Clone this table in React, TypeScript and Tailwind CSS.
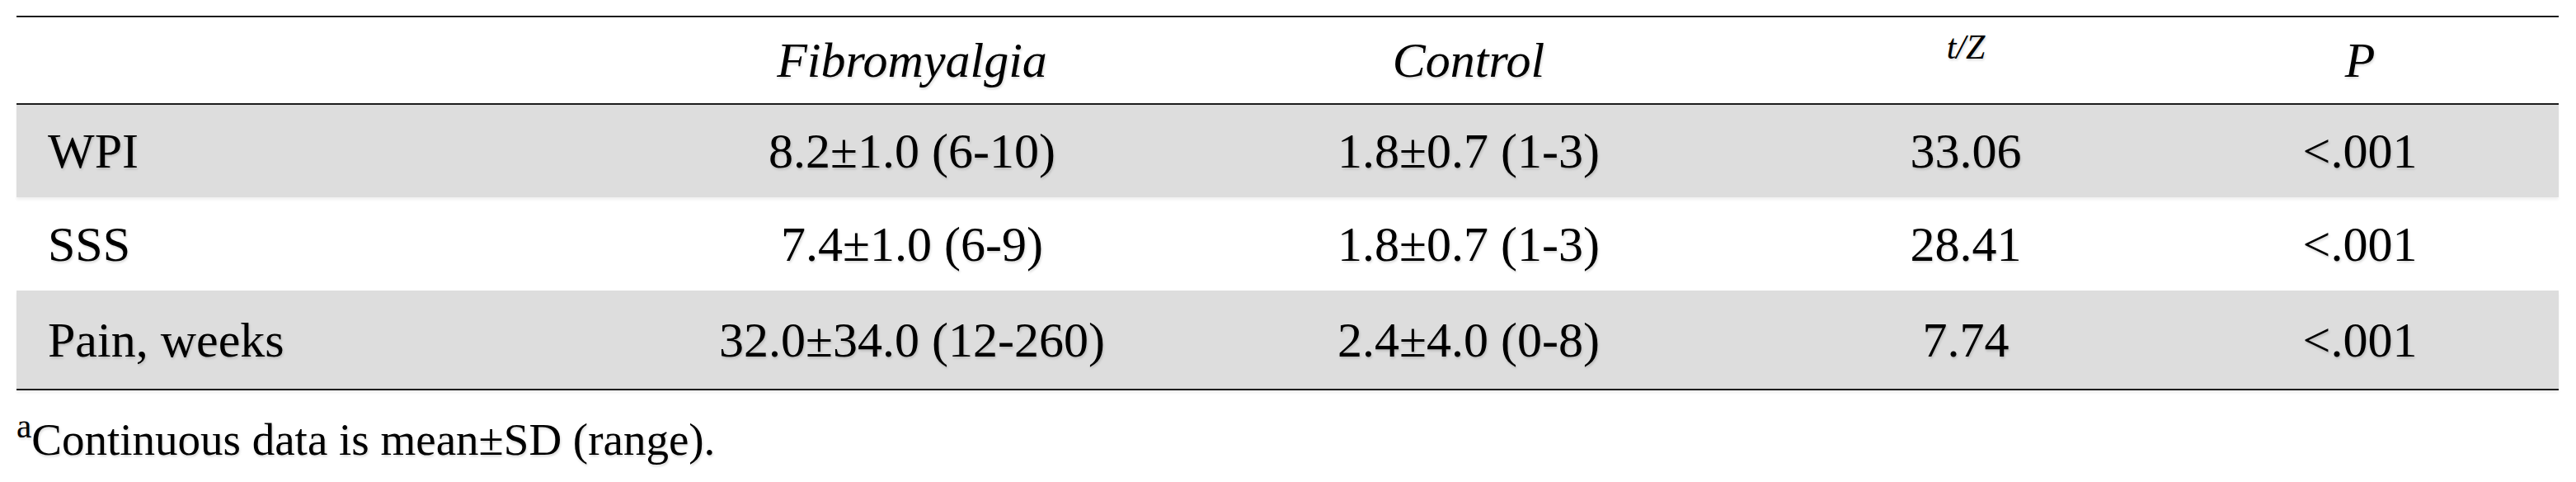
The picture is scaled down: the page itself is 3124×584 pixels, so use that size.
import React from "react";

type Row = {
  label: string;
  fm: string;
  ct: string;
  t: string;
  p: string;
  gray: boolean;
  h: string;
};

const rows: Row[] = [
  { label: "WPI", fm: "8.2±1.0 (6-10)", ct: "1.8±0.7 (1-3)", t: "33.06", p: "<.001", gray: true, h: "h-[112px]" },
  { label: "SSS", fm: "7.4±1.0 (6-9)", ct: "1.8±0.7 (1-3)", t: "28.41", p: "<.001", gray: false, h: "h-[113px]" },
  { label: "Pain, weeks", fm: "32.0±34.0 (12-260)", ct: "2.4±4.0 (0-8)", t: "7.74", p: "<.001", gray: true, h: "h-[121px] border-b-2 border-[#1c1c1c]" },
];

export default function App() {
  return (
    <div className="bg-white w-[3124px] h-[584px] pt-[19px] pl-[20px] font-['Liberation_Serif','Times_New_Roman',serif] text-black [text-shadow:1px_2px_3px_rgba(0,0,0,0.16)]">
      <div className="w-[3083px]">
        <div className="grid grid-cols-[777px_618px_732px_474px_482px] items-center h-[108px] border-t-2 border-b-2 border-[#1c1c1c] text-[60px] leading-none italic">
          <div />
          <div className="text-center">Fibromyalgia</div>
          <div className="text-center">Control</div>
          <div className="text-center self-start pt-[15px] text-[42px]">t/Z</div>
          <div className="text-center">P</div>
        </div>
        {rows.map((r) => (
          <div
            key={r.label}
            className={`grid grid-cols-[777px_618px_732px_474px_482px] items-center text-[60px] leading-none ${r.h} ${
              r.gray ? "bg-[#dddddd] shadow-[0_3px_3px_rgba(0,0,0,0.06)]" : ""
            }`}
          >
            <div className="pl-[38px]">{r.label}</div>
            <div className="text-center">{r.fm}</div>
            <div className="text-center">{r.ct}</div>
            <div className="text-center">{r.t}</div>
            <div className="text-center">{r.p}</div>
          </div>
        ))}
      </div>
      <div className="mt-[32px] text-[55px] leading-none">
        <sup>a</sup>Continuous data is mean±SD (range).
      </div>
    </div>
  );
}
